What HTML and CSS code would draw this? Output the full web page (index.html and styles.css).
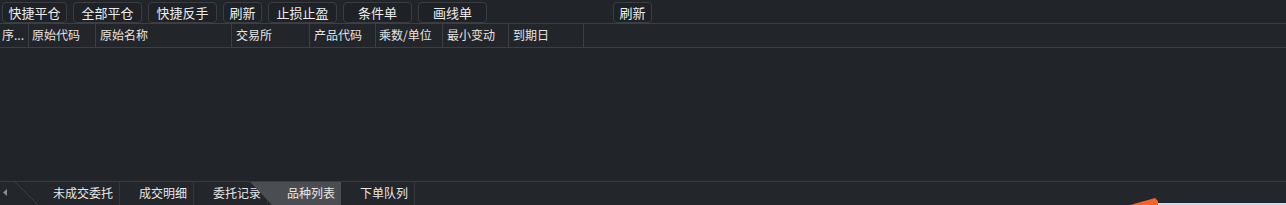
FILE: index.html
```html
<!DOCTYPE html>
<html lang="zh-CN">
<head>
<meta charset="utf-8">
<title>品种列表</title>
<link rel="stylesheet" href="styles.css">
</head>
<body>
<div class="app">
  <div class="toolbar">
    <button class="btn w65">快捷平仓</button>
    <button class="btn w69">全部平仓</button>
    <button class="btn w69">快捷反手</button>
    <button class="btn w39">刷新</button>
    <button class="btn w69">止损止盈</button>
    <button class="btn w69">条件单</button>
    <button class="btn w69">画线单</button>
    <button class="btn w39 far">刷新</button>
  </div>
  <div class="header">
    <div class="cell c1">序...</div>
    <div class="cell c2">原始代码</div>
    <div class="cell c3">原始名称</div>
    <div class="cell c4">交易所</div>
    <div class="cell c5">产品代码</div>
    <div class="cell c6">乘数/单位</div>
    <div class="cell c7">最小变动</div>
    <div class="cell c8">到期日</div>
  </div>
  <div class="body"></div>
  <div class="tabbar">
    <svg class="nav" width="38" height="23" viewBox="0 0 38 23">
      <path d="M7 7 L3 10.5 L7 14 Z" fill="#8a8d91"/>
      <line x1="15" y1="0" x2="38" y2="23" stroke="#3a3d42" stroke-width="1"/>
    </svg>
    <div class="tab first">未成交委托</div>
    <div class="tab">成交明细</div>
    <div class="tab">委托记录</div>
    <div class="tab active">品种列表</div>
    <div class="tab">下单队列</div>
  </div>
  <svg class="overlay" width="158" height="9" viewBox="0 0 158 9">
    <path d="M2 9 L20 4 L27 2 L30 5 L30 9 Z" fill="#f2642c"/>
    <rect x="30" y="7" width="128" height="2" fill="#cfdcea"/>
  </svg>
</div>
</body>
</html>
```
FILE: styles.css
```css
* { box-sizing: border-box; }
html, body {
  margin: 0;
  padding: 0;
  background: #212428;
  overflow: hidden;
}
.app {
  position: relative;
  width: 1286px;
  height: 205px;
  display: flex;
  flex-direction: column;
  font-family: "Noto Sans CJK SC", "Microsoft YaHei", sans-serif;
  color: #e4e4e4;
}
.toolbar {
  height: 24px;
  display: flex;
  gap: 6px;
  padding: 2px 0 0 2px;
  border-bottom: 1px solid #3c3f44;
}
.btn {
  height: 21px;
  border: 1px solid #3a3d42;
  border-radius: 4px;
  background: #1e2125;
  color: #ececec;
  font-family: inherit;
  font-size: 13px;
  line-height: 19px;
  padding: 0;
  text-align: center;
}
.w65 { width: 65px; }
.w69 { width: 69px; }
.w39 { width: 39px; }
.far { margin-left: 120px; }
.header {
  height: 24px;
  display: flex;
  border-bottom: 1px solid #3c3f44;
  background: #222529;
}
.cell {
  height: 23px;
  border-right: 1px solid #3c3f44;
  font-size: 12px;
  line-height: 22px;
  padding-left: 2px;
  white-space: nowrap;
  overflow: hidden;
}
.c1 { width: 29px; }
.c2 { width: 67px; padding-left: 3px; }
.c3 { width: 136px; padding-left: 4px; }
.c4 { width: 78px; padding-left: 4px; }
.c5 { width: 66px; padding-left: 4px; }
.c6 { width: 67px; padding-left: 3px; }
.c7 { width: 66px; padding-left: 4px; }
.c8 { width: 75px; padding-left: 4px; }
.body {
  flex: 1;
  border-bottom: 1px solid #3a3d41;
}
.tabbar {
  height: 23px;
  display: flex;
  background: #23262a;
}
.nav { flex: none; display: block; }
.tab {
  height: 23px;
  font-size: 12px;
  line-height: 22px;
  padding: 0 6px 0 19px;
  color: #e8e8e8;
  border-right: 1px solid #34373b;
  white-space: nowrap;
}
.tab.first { padding-left: 15px; }
.tab.active {
  position: relative;
  margin-left: -18px;
  padding-left: 37px;
  background: #4a4d51;
  border-right: none;
  clip-path: polygon(0 0, 100% 0, 100% 100%, 22px 100%);
}
.overlay {
  position: absolute;
  left: 1128px;
  top: 196px;
  display: block;
}
```
